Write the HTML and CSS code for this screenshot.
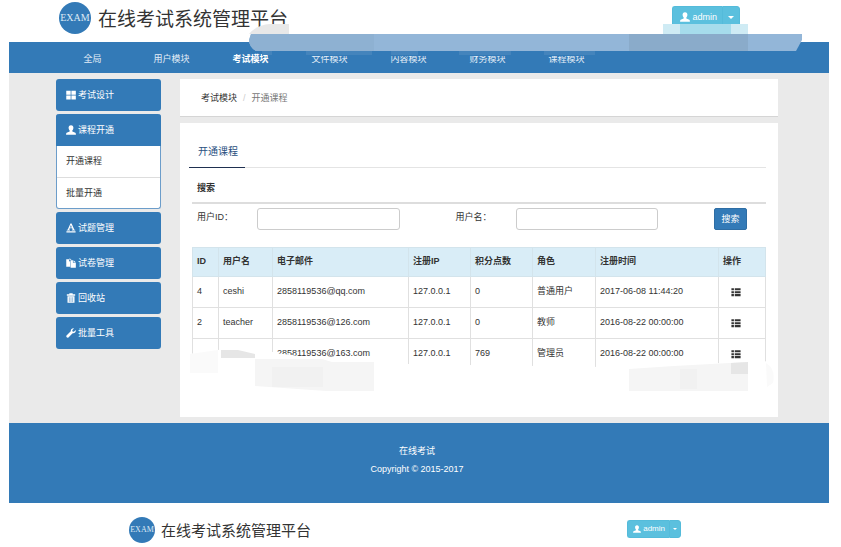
FILE: index.html
```
<!DOCTYPE html>
<html lang="zh-CN">
<head>
    <meta charset="UTF-8">
    <meta name="viewport" content="width=device-width, initial-scale=1.0">
    <title>在线考试系统管理平台</title>
    <link rel="stylesheet" href="styles.css">
</head>
<body>
    <!-- 图标 -->
    <svg class="icon-defs" aria-hidden="true">
        <symbol id="icon-user" viewBox="0 0 12 12"><path d="M6 0.3C4 0.3 3 1.8 3.1 3.6C3.2 5 3.8 6 4.4 6.6V7.8L0.8 9.3C0.3 9.6 0.1 10.3 0.1 11.6H11.9C11.9 10.3 11.7 9.6 11.2 9.3L7.6 7.8V6.6C8.2 6 8.8 5 8.9 3.6C9 1.8 8 0.3 6 0.3Z"/></symbol>
        <symbol id="icon-grid" viewBox="0 0 12 12"><path d="M0.3 0.8H5.6V5.6H0.3ZM6.5 0.8H11.8V5.6H6.5ZM0.3 6.5H5.6V11.3H0.3ZM6.5 6.5H11.8V11.3H6.5Z"/></symbol>
        <symbol id="icon-color" viewBox="0 0 12 12"><path d="M5.3 0.5H6.7L10 8H11V9H7V8H8L7.4 6.4H4.4L3.8 8H4.8V9H1V8H2ZM4.8 5.3H7L5.9 2.5ZM0.5 10H11.5V11.5H0.5Z" fill-rule="evenodd"/></symbol>
        <symbol id="icon-copy" viewBox="0 0 12 12"><path d="M0.3 1.5H3.6V4.5L5 3.3V10.5H0.3ZM5.5 2.6H8.3V5.6H11.8V11.8H5.5ZM9 2.6L11.8 5H9ZM4.2 0.3L6.8 2H5L4.2 3Z"/></symbol>
        <symbol id="icon-trash" viewBox="0 0 12 12"><path d="M4 1.4V0.3H8V1.4H11V3.2H1V1.4ZM1.8 3.8H10.2V11.8H1.8ZM3.5 5V10.8H4.1V5ZM5.7 5V10.8H6.3V5ZM7.9 5V10.8H8.5V5Z" fill-rule="evenodd"/></symbol>
        <symbol id="icon-wrench" viewBox="0 0 12 12"><path d="M11.6 2.4L9.4 4.5L7.8 4.2L7.5 2.6L9.6 0.4C7.8 -0.1 5.6 1.2 5.7 3.8L0.6 9C-0.4 10.3 1.5 12.3 2.9 11.3L8 6.3C10.6 6.6 12.3 4.5 11.6 2.4Z"/></symbol>
        <symbol id="icon-list" viewBox="0 0 12 12"><path d="M0.5 1.5H3.5V4H0.5ZM4.5 1.5H11.5V4H4.5ZM0.5 5H3.5V7.5H0.5ZM4.5 5H11.5V7.5H4.5ZM0.5 8.5H3.5V11H0.5ZM4.5 8.5H11.5V11H4.5Z"/></symbol>
    </svg>

    <div class="page">
        <!-- 顶部 -->
        <header class="header">
            <div class="brand">
                <span class="logo">EXAM</span>
                <h1 class="title">在线考试系统管理平台</h1>
            </div>
            <div class="account">
                <button type="button" class="btn-user"><svg class="icon"><use href="#icon-user"/></svg>admin</button>
                <button type="button" class="btn-caret" aria-label="更多"><span class="caret"></span></button>
            </div>
        </header>

        <!-- 导航 -->
        <nav class="nav">
            <a href="#">全局</a>
            <a href="#">用户模块</a>
            <a href="#" class="active">考试模块</a>
            <a href="#">文件模块</a>
            <a href="#">内容模块</a>
            <a href="#">财务模块</a>
            <a href="#">课程模块</a>
        </nav>

        <!-- 导航上的涂抹 -->
        <svg class="smudge smudge-top" width="570" height="36" viewBox="0 0 570 36" aria-hidden="true">
            <path fill="#e8e8e8" d="M3 10Q10 1 24 0H43V10Z"/>
            <path fill="#cfebf4" d="M417 0H502V10H417Z"/>
            <path fill="#a6dcec" d="M434 0H485V10H434Z"/>
            <path fill="#337ab7" d="M10 27H535V32H58V29H10Z"/>
            <path fill="#4484bc" d="M16 27H26V31H16ZM60 27H126V31H60ZM145 27H172V31H145ZM213 27H265V31H213ZM298 27H349V31H298Z"/>
            <path fill="#93b6d8" d="M5 10H556V16L550 27H10Q3 23 3 16Z"/>
            <path fill="#8eb1d2" d="M5 10H128V27H10Q3 23 3 16Z"/>
            <path fill="#8aabca" d="M383 10H502V27H383Z"/>
        </svg>

        <div class="content">
            <!-- 侧边菜单 -->
            <aside class="sidebar">
                <a href="#" class="menu-title"><svg class="icon"><use href="#icon-grid"/></svg>考试设计</a>
                <div class="menu-open">
                    <a href="#" class="menu-title"><svg class="icon"><use href="#icon-user"/></svg>课程开通</a>
                    <a href="#" class="menu-item">开通课程</a>
                    <a href="#" class="menu-item">批量开通</a>
                </div>
                <a href="#" class="menu-title"><svg class="icon"><use href="#icon-color"/></svg>试题管理</a>
                <a href="#" class="menu-title"><svg class="icon"><use href="#icon-copy"/></svg>试卷管理</a>
                <a href="#" class="menu-title"><svg class="icon"><use href="#icon-trash"/></svg>回收站</a>
                <a href="#" class="menu-title"><svg class="icon"><use href="#icon-wrench"/></svg>批量工具</a>
            </aside>

            <main class="main">
                <div class="breadcrumb">
                    <a href="#">考试模块</a>
                    <span class="slash">/</span>
                    <span class="current">开通课程</span>
                </div>

                <section class="panel">
                    <div class="tabs"><a href="#" class="tab">开通课程</a></div>

                    <div class="panel-body">
                        <h2 class="search-title">搜索</h2>
                        <form class="search-form">
                            <div class="field">
                                <label for="userid">用户ID：</label>
                                <input type="text" id="userid">
                            </div>
                            <div class="field">
                                <label for="username">用户名：</label>
                                <input type="text" id="username">
                            </div>
                            <button type="button" class="btn-search">搜索</button>
                        </form>

                        <table class="users">
                            <colgroup>
                                <col class="col-id"><col class="col-name"><col class="col-mail"><col class="col-ip">
                                <col class="col-score"><col class="col-role"><col class="col-time"><col class="col-action">
                            </colgroup>
                            <thead>
                                <tr><th>ID</th><th>用户名</th><th>电子邮件</th><th>注册IP</th><th>积分点数</th><th>角色</th><th>注册时间</th><th>操作</th></tr>
                            </thead>
                            <tbody>
                                <tr><td>4</td><td>ceshi</td><td>2858119536@qq.com</td><td>127.0.0.1</td><td>0</td><td>普通用户</td><td>2017-06-08 11:44:20</td><td><a href="#" class="action" aria-label="操作"><svg class="icon"><use href="#icon-list"/></svg></a></td></tr>
                                <tr><td>2</td><td>teacher</td><td>2858119536@126.com</td><td>127.0.0.1</td><td>0</td><td>教师</td><td>2016-08-22 00:00:00</td><td><a href="#" class="action" aria-label="操作"><svg class="icon"><use href="#icon-list"/></svg></a></td></tr>
                                <tr><td></td><td></td><td>2858119536@163.com</td><td>127.0.0.1</td><td>769</td><td>管理员</td><td>2016-08-22 00:00:00</td><td><a href="#" class="action" aria-label="操作"><svg class="icon"><use href="#icon-list"/></svg></a></td></tr>
                            </tbody>
                        </table>

                        <!-- 表格底部的涂抹 -->
                        <svg class="smudge smudge-table" width="590" height="50" viewBox="0 0 590 50" aria-hidden="true">
                            <path fill="#fff" d="M0 6Q12 0 32 1L69 3L86 3V4L103 6L127 10L163 14L403 18L533 14L583 12V50H0Z"/>
                            <path fill="#fafafa" d="M1 5L29 1V24H1ZM577 14Q587 20 584 34L578 38Z"/>
                            <path fill="#e6e6e6" d="M32 1L49 1L66 5V9H32Z"/>
                            <path fill="#f5f5f5" d="M66 10L133 10L143 13H185V42H137L66 37ZM440 20L485 17L559 13V42H440Z"/>
                            <path fill="#f1f1f1" d="M83 18H134V38L83 38ZM491 20H508V40H491Z"/>
                            <path fill="#e6e6e6" d="M542 14L559 13V25H542Z"/>
                        </svg>
                    </div>
                </section>
            </main>
        </div>

        <footer class="footer">
            <p>在线考试</p>
            <p>Copyright © 2015-2017</p>
        </footer>

        <header class="header header-small">
            <div class="brand">
                <span class="logo">EXAM</span>
                <h2 class="title">在线考试系统管理平台</h2>
            </div>
            <div class="account">
                <button type="button" class="btn-user"><svg class="icon"><use href="#icon-user"/></svg>admin</button>
                <button type="button" class="btn-caret" aria-label="更多"><span class="caret"></span></button>
            </div>
        </header>
    </div>
</body>
</html>
```
FILE: styles.css
```
* {
    box-sizing: border-box;
}

body {
    margin: 0;
    font-family: "Liberation Sans", "Noto Sans CJK SC", sans-serif;
    font-size: 9px;
    line-height: 12px;
    color: #333;
    background-color: #fff;
}

a {
    color: inherit;
    text-decoration: none;
}

button,
input {
    font: inherit;
}

h1,
h2,
p {
    margin: 0;
}

.icon-defs {
    position: absolute;
    width: 0;
    height: 0;
}

.icon {
    width: 10px;
    height: 10px;
    fill: currentColor;
    flex: none;
}

.page {
    position: relative;
    padding: 0 12px 0 9px;
}

/* 顶部 */
.header {
    display: flex;
    justify-content: space-between;
    align-items: flex-start;
    height: 42px;
    padding: 2px 89px 0 50px;
}

.brand {
    display: flex;
    align-items: flex-start;
    gap: 7px;
}

.logo {
    display: flex;
    align-items: center;
    justify-content: center;
    width: 32px;
    height: 32px;
    border-radius: 50%;
    background-color: #337ab7;
    color: #dce9f5;
    font-family: "Liberation Serif", serif;
    font-size: 10px;
}

.title {
    font-size: 19px;
    line-height: 35px;
    font-weight: normal;
    white-space: nowrap;
}

.account {
    display: flex;
    margin-top: 4px;
}

.btn-user,
.btn-caret {
    display: flex;
    align-items: center;
    height: 22px;
    border: 1px solid #54bbda;
    background-color: #5bc0de;
    color: #fff;
}

.btn-user {
    gap: 2px;
    padding: 0 5px 0 7px;
    border-right: 0;
    border-radius: 3px 0 0 3px;
}

.btn-caret {
    padding: 0 5px;
    border-radius: 0 3px 3px 0;
}

.caret {
    border: 3px solid transparent;
    border-top-color: #fff;
    border-bottom: 0;
}

/* 导航 */
.nav {
    display: flex;
    height: 31px;
    padding-left: 44px;
    background-color: #337ab7;
    color: #e4eef7;
    line-height: 34px;
}

.nav a {
    width: 79px;
    text-align: center;
}

.nav .active {
    font-weight: bold;
    color: #fff;
}

.smudge {
    position: absolute;
    pointer-events: none;
}

.smudge-top {
    top: 24px;
    left: 246px;
}

/* 内容 */
.content {
    display: flex;
    align-items: flex-start;
    gap: 19px;
    padding: 6px 51px 6px 47px;
    background-color: #eaeaea;
}

.sidebar {
    display: flex;
    flex-direction: column;
    gap: 3px;
    width: 105px;
    flex: none;
}

.menu-title {
    display: flex;
    align-items: center;
    gap: 2px;
    height: 32px;
    padding-left: 10px;
    border-radius: 3px;
    background-color: #337ab7;
    color: #fff;
}

.menu-open {
    border: 1px solid #6c9dca;
    border-top: 0;
    border-radius: 3px;
    background-color: #fff;
}

.menu-open .menu-title {
    margin: 0 -1px;
    border-radius: 3px 3px 0 0;
}

.menu-item {
    display: block;
    height: 31px;
    padding-left: 9px;
    line-height: 31px;
}

.menu-item + .menu-item {
    border-top: 1px solid #ddd;
}

.main {
    flex: 1;
    min-width: 0;
}

.breadcrumb {
    display: flex;
    align-items: center;
    gap: 6px;
    height: 38px;
    padding-left: 21px;
    margin-bottom: 6px;
    border-bottom: 1px solid #d5d5d5;
    background-color: #fff;
}

.slash {
    color: #ccc;
}

.current {
    color: #777;
}

.panel {
    padding: 12px 12px 0 9px;
    min-height: 294px;
    background-color: #fff;
}

.tabs {
    display: flex;
    border-bottom: 1px solid #e4e4e4;
}

.tab {
    height: 33px;
    margin-bottom: -1px;
    padding: 0 7px 0 9px;
    border-bottom: 1px solid #1f3050;
    font-size: 10px;
    line-height: 33px;
    color: #2a5080;
}

.panel-body {
    position: relative;
    padding-left: 3px;
}

.search-title {
    height: 36px;
    padding-left: 5px;
    border-bottom: 2px solid #ddd;
    font-size: 9px;
    line-height: 40px;
}

.search-form {
    display: flex;
    gap: 56px;
    padding: 4px 19px 17px 5px;
}

.field {
    display: flex;
    flex: 1;
    min-width: 0;
}

.field label {
    width: 60px;
    flex: none;
    line-height: 18px;
}

.field input {
    flex: 1;
    min-width: 0;
    height: 22px;
    padding: 0 6px;
    border: 1px solid #ccc;
    border-radius: 3px;
}

.btn-search {
    width: 33px;
    height: 22px;
    padding: 0;
    border: 1px solid #2e6da4;
    border-radius: 2px;
    background-color: #337ab7;
    color: #fff;
}

/* 表格 */
.users {
    width: 100%;
    table-layout: fixed;
    border-collapse: collapse;
}

.users th,
.users td {
    height: 31px;
    padding: 0 4px 2px;
    border: 1px solid #e0e0e0;
    text-align: left;
    white-space: nowrap;
}

.users th {
    height: 29px;
    border-color: #d3e4ec;
    background-color: #d9edf7;
}

.col-id { width: 26px; }
.col-name { width: 54px; }
.col-mail { width: 136px; }
.col-ip { width: 62px; }
.col-score { width: 62px; }
.col-role { width: 63px; }
.col-time { width: 123px; }

.action {
    display: flex;
    padding: 2px 0 0 8px;
}

.smudge-table {
    top: 181px;
    left: 0;
}

/* 底部 */
.footer {
    height: 80px;
    padding: 19px 51px 0 47px;
    background-color: #337ab7;
    color: #fff;
    text-align: center;
    line-height: 18px;
}

.header-small {
    height: 44px;
    padding: 14px 148px 0 120px;
}

.header-small .brand {
    gap: 6px;
}

.header-small .logo {
    width: 26px;
    height: 26px;
    font-size: 8px;
}

.header-small .title {
    font-size: 15px;
    line-height: 27px;
}

.header-small .account {
    margin-top: 3px;
    font-size: 8px;
}

.header-small .btn-user,
.header-small .btn-caret {
    height: 18px;
}

.header-small .btn-user {
    padding: 0 4px 0 5px;
}

.header-small .btn-caret {
    padding: 0 3px;
}

.header-small .caret {
    border-width: 2px 2px 0;
}

.header-small .icon {
    width: 8px;
    height: 8px;
}
```
